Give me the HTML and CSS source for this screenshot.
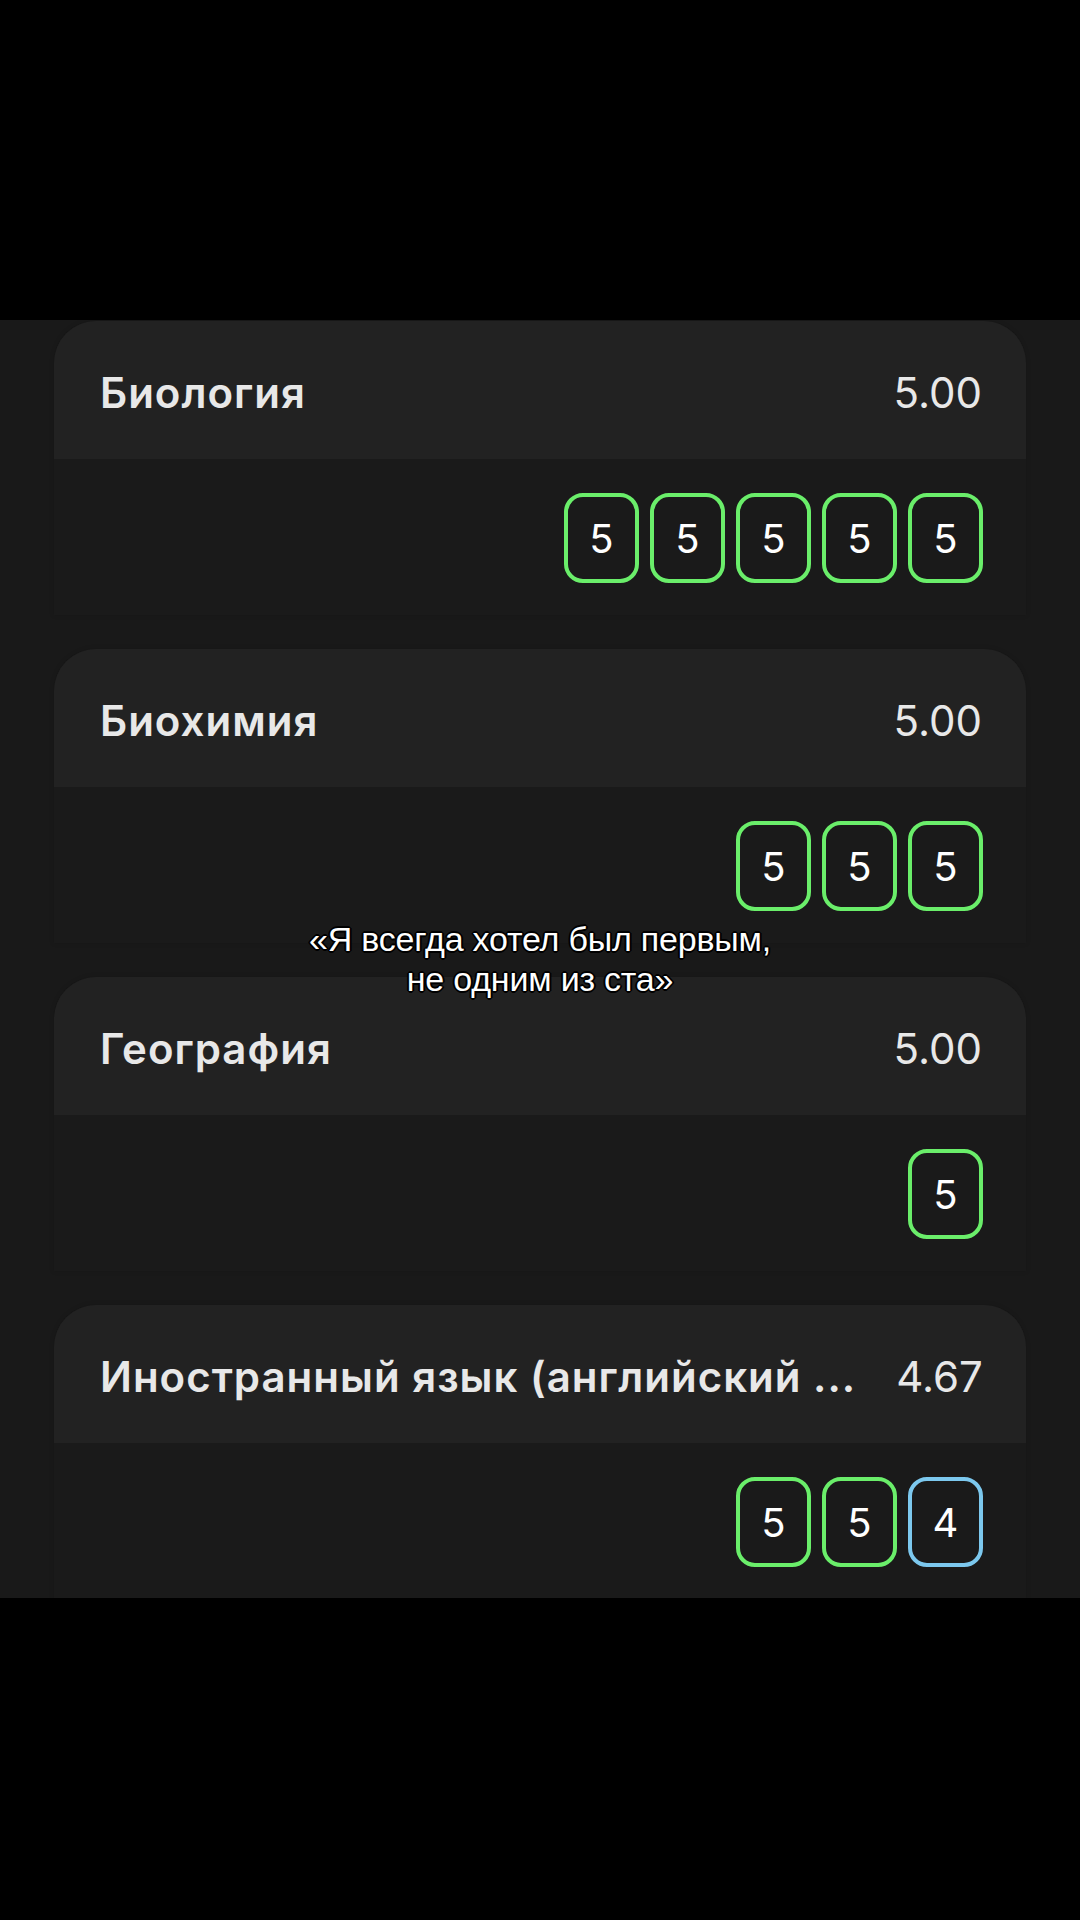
FILE: index.html
```html
<!DOCTYPE html>
<html lang="ru">
<head>
<meta charset="utf-8">
<link rel="stylesheet" href="styles.css">
</head>
<body>
<div class="screen">
  <div class="top-bar"></div>
  <div class="list">
    <div class="card">
      <div class="card-head"><span class="subject">Биология</span><span class="avg">5.00</span></div>
      <div class="grades">
        <span class="grade g5">5</span><span class="grade g5">5</span><span class="grade g5">5</span><span class="grade g5">5</span><span class="grade g5">5</span>
      </div>
    </div>
    <div class="card">
      <div class="card-head"><span class="subject">Биохимия</span><span class="avg">5.00</span></div>
      <div class="grades">
        <span class="grade g5">5</span><span class="grade g5">5</span><span class="grade g5">5</span>
      </div>
    </div>
    <div class="card">
      <div class="card-head"><span class="subject">География</span><span class="avg">5.00</span></div>
      <div class="grades">
        <span class="grade g5">5</span>
      </div>
    </div>
    <div class="card">
      <div class="card-head"><span class="subject">Иностранный язык (английский ...</span><span class="avg">4.67</span></div>
      <div class="grades">
        <span class="grade g5">5</span><span class="grade g5">5</span><span class="grade g4">4</span>
      </div>
    </div>
  </div>
  <div class="bottom-bar"></div>
  <div class="caption">«Я всегда хотел был первым,<br>не одним из ста»</div>
</div>
</body>
</html>
```

FILE: styles.css
```css
html, body {
  margin: 0;
  padding: 0;
  background: #000;
}
.screen {
  position: relative;
  width: 1080px;
  height: 1920px;
  overflow: hidden;
  background: #000;
  font-family: Inter, "Noto Sans", "Liberation Sans", sans-serif;
}
.top-bar {
  height: 320px;
  background: #000;
}
.list {
  height: 1278px;
  overflow: hidden;
  background: #191919;
  padding: 1px 54px 0;
  box-sizing: border-box;
  display: flex;
  flex-direction: column;
  gap: 34px;
}
.card {
  flex: 0 0 294px;
  background: #1a1a1a;
  border-radius: 42px 42px 0 0;
  box-shadow: 0 0 5px rgba(0,0,0,0.15);
}
.card-head {
  height: 138px;
  background: #222222;
  border-radius: 42px 42px 0 0;
  display: flex;
  align-items: center;
  justify-content: space-between;
  padding: 4px 44px 0 46px;
  box-sizing: border-box;
  color: #e8e8e8;
  font-size: 42px;
}
.subject {
  font-weight: 600;
  white-space: nowrap;
  letter-spacing: 1px;
}
.avg {
  font-weight: 400;
  margin-left: 40px;
}
.grades {
  display: flex;
  justify-content: flex-end;
  gap: 11px;
  padding: 34px 43px 0 0;
}
.grade {
  width: 75px;
  height: 90px;
  box-sizing: border-box;
  border: 4px solid #6aee6a;
  border-radius: 19px;
  display: flex;
  align-items: center;
  justify-content: center;
  color: #fff;
  font-size: 40px;
  font-weight: 400;
}
.grade.g4 {
  border-color: #7cc8ee;
}
.bottom-bar {
  height: 322px;
  background: #000;
}
.caption {
  position: absolute;
  left: 0;
  right: 0;
  top: 919px;
  text-align: center;
  color: #fff;
  font-family: "Liberation Sans", Arial, sans-serif;
  font-size: 34px;
  line-height: 40px;
  letter-spacing: -0.2px;
  text-shadow: -2px 0 0 #000, 2px 0 0 #000, 0 -2px 0 #000, 0 2px 0 #000,
    -1px -1px 0 #000, 1px 1px 0 #000, -1px 1px 0 #000, 1px -1px 0 #000;
}
```
